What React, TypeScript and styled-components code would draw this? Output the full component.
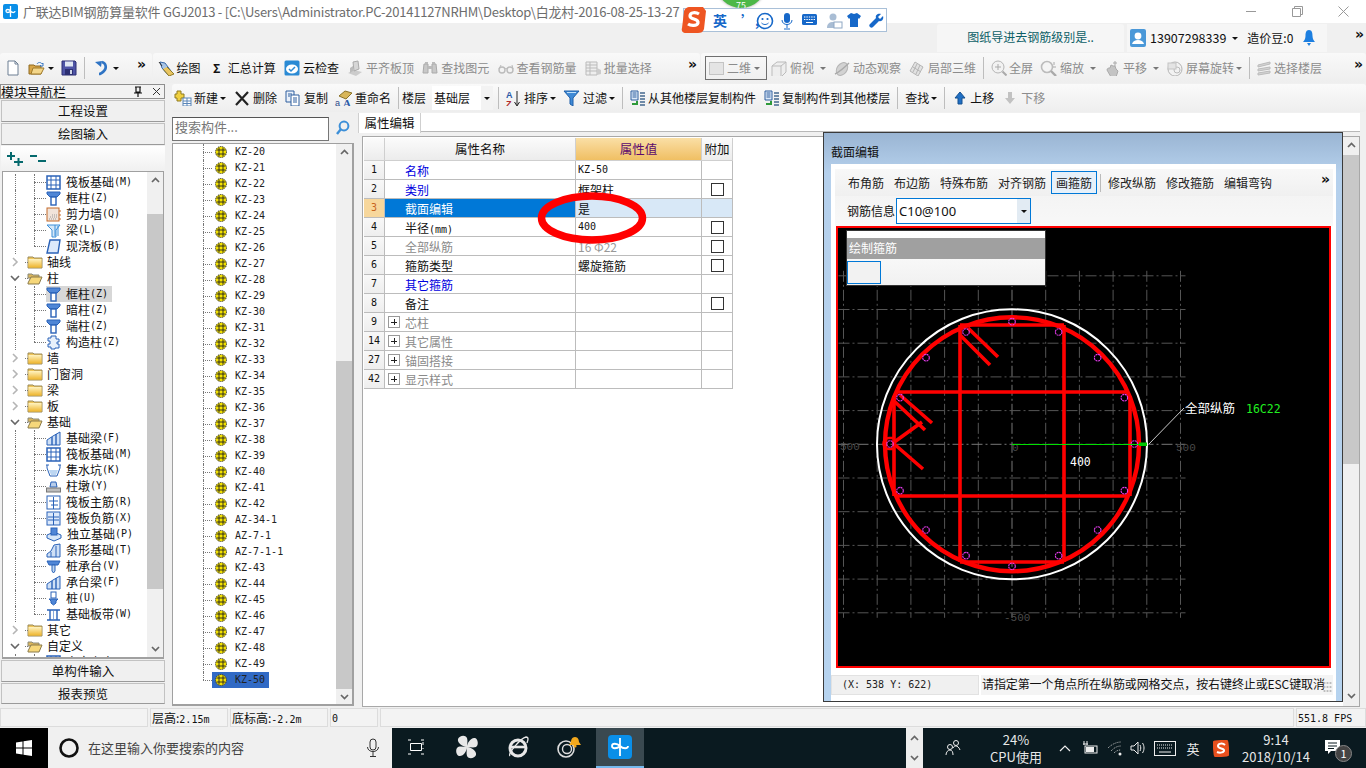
import React from "react";
import styled, { createGlobalStyle } from "styled-components";

const CJK = '"Noto Sans CJK SC", "Noto Sans", sans-serif';
const MONO = '"DejaVu Sans Mono", "Liberation Mono", monospace';

const Global = createGlobalStyle`
  html, body { margin: 0; padding: 0; background: #f0f0f0; overflow: hidden; }
  * { box-sizing: border-box; }
  body { font: 12px/16px ${CJK}; color: #111; }
`;

const Page = styled.div`
  position: relative; width: 1366px; height: 768px; overflow: hidden;
  display: flex; flex-direction: column; background: #f0f0f0;
`;

/* ---------- title ---------- */
const TitleBar = styled.div`
  height: 23px; background: #fff; display: flex; align-items: center; padding-left: 3px; position: relative;
`;
const TitleText = styled.div`
  margin-left: 5px; width: 660px; white-space: nowrap; overflow: hidden; color: #6d6d6d;
  font-size: 13px; line-height: 23px; letter-spacing: -0.22px;
`;
const WinControls = styled.div`
  margin-left: auto; display: flex; align-items: center;
`;
const WinBtn = styled.div`
  width: 46px; height: 23px; display: flex; align-items: center; justify-content: center;
`;
const Sogou = styled.div`
  position: absolute; left: 683px; top: 8px; width: 204px; height: 24px; background: #fff;
  border: 1px solid #a9c0d8; display: flex; align-items: center; z-index: 5;
`;
const SogouLogo = styled.div`
  position: absolute; left: -4px; top: -3px;
`;
const SogouItem = styled.div<{ $x: number }>`
  position: absolute; left: ${(p) => p.$x}px; top: 3px; color: #1668c9; font-weight: 700; font-size: 14px; line-height: 17px;
`;
const Ball = styled.div`
  position: absolute; left: 716px; top: -42px; width: 50px; height: 50px; border-radius: 50%;
  background: #4cb848; color: #fff; font-size: 9px; text-align: center; line-height: 96px; z-index: 4; box-shadow: 0 0 3px #999;
`;

/* ---------- info bar ---------- */
const InfoBar = styled.div`
  height: 30px; display: flex; align-items: flex-start; padding: 1px 0 0 937px; gap: 3px; position: relative;
`;
const Notice = styled.div`
  width: 187px; height: 28px; background: #f6f6f6; border-radius: 3px 3px 0 0; color: #0d5f66;
  font-size: 12px; line-height: 26px; text-align: center;
`;
const UserBox = styled.div`
  width: 200px; height: 28px; background: #f6f6f6; display: flex; align-items: center; padding-left: 3px; font-size: 12px;
`;
const Phone = styled.span`
  margin-left: 4px; font-size: 12.5px;
`;
const Bean = styled.span`
  margin-left: 9px; margin-right: 9px;
`;
const Chevrons = styled.span`
  font: 700 14px/12px "DejaVu Sans", sans-serif; color: #111;
`;
const InfoMore = styled.div`
  position: absolute; right: 2px; top: 3px;
`;

/* ---------- tool bars ---------- */
const ToolRow = styled.div`
  height: 30px; display: flex; gap: 1px;
`;
const Band = styled.div<{ $w?: number; $pad?: number; $gap?: number }>`
  ${(p) => (p.$w ? `width:${p.$w}px;` : "flex:1;")}
  height: 30px; display: flex; align-items: center; gap: ${(p) => p.$gap ?? 7}px; padding-left: ${(p) => p.$pad ?? 3}px; position: relative;
  background: linear-gradient(#f9f9f9, #eeeeee); border-radius: 3px;
`;
const BandMore = styled.div<{ $r: number }>`
  position: absolute; right: ${(p) => p.$r}px; top: 3px;
`;
const Tool = styled.div<{ $off?: boolean }>`
  display: flex; align-items: center; gap: 2px; white-space: nowrap; height: 22px; line-height: 20px;
  color: ${(p) => (p.$off ? "#8c8c8c" : "#111")};
`;
const IconBox = styled.span<{ $w?: number }>`
  width: ${(p) => p.$w ?? 18}px; height: 18px; display: inline-flex; align-items: center; justify-content: center; flex: none;
`;
const Caret = styled.span<{ $off?: boolean; $m?: number }>`
  display: inline-block; width: 0; height: 0; margin-left: ${(p) => p.$m ?? 0}px;
  border-left: 3px solid transparent; border-right: 3px solid transparent;
  border-top: 3px solid ${(p) => (p.$off ? "#777" : "#111")};
`;
const Sep = styled.span<{ $mr?: number }>`
  width: 1px; height: 22px; background: #bdbdbd; flex: none; margin-right: ${(p) => p.$mr ?? 0}px;
`;
const ViewCombo = styled.div`
  width: 62px; height: 24px; border: 1px solid #6f6f6f; display: flex; align-items: center; padding-left: 3px; gap: 3px; color: #8c8c8c; margin-right: -4px;
`;
const ViewSquare = styled.span`
  width: 15px; height: 13px; background: #e4e4e4; border: 1px solid #c4c4c4;
`;

/* ---------- main ---------- */
const Main = styled.div`
  height: 624px; display: flex;
`;
const LeftNav = styled.div`
  width: 166px; display: flex; flex-direction: column; padding-top: 1px;
`;
const NavHead = styled.div`
  height: 15px; border: 1px solid #8f8f8f; margin: 0 1px 0 0; display: flex; align-items: center; font-size: 13px; line-height: 13px; background: #f2f2f2; overflow: hidden;
`;
const NavHeadIcons = styled.span`
  margin-left: auto; margin-right: 3px; display: flex; gap: 9px; align-items: center;
`;
const NavBtn = styled.div<{ $h?: number }>`
  height: ${(p) => p.$h ?? 22}px; margin: 1px 1px 0 1px; background: #f0f0f0; border: 1px solid #c2c2c2; border-bottom-color: #9a9a9a;
  text-align: center; line-height: 20px; font-size: 12.5px; flex: none;
`;
const NavTools = styled.div`
  height: 25px; margin: 1px 1px 0 1px; background: linear-gradient(#fff, #f0f0f0); display: flex; align-items: center; padding-left: 5px; gap: 5px; flex: none;
`;
const TreeBox = styled.div`
  height: 488px; margin: 0 2px 0 2px; border: 1px solid #a0a0a0; border-bottom-width: 2px; background: #fff; display: flex; overflow: hidden; flex: none;
`;
const TreeList = styled.div`
  flex: 1; padding-top: 2px; overflow: hidden;
`;
const TreeRow = styled.div<{ $child?: boolean; $last?: boolean; $rail?: boolean }>`
  position: relative; height: 16px; display: flex; align-items: center; white-space: nowrap;
  padding-left: ${(p) => (p.$child ? 43 : 10)}px;
  ${(p) => p.$rail && `&::before{content:"";position:absolute;left:12px;top:0;bottom:0;border-left:1px dotted #777;}`}
  ${(p) =>
    p.$child &&
    `&::after{content:"";position:absolute;left:31px;top:0;height:${p.$last ? 8 : 16}px;width:12px;border-left:1px dotted #777;}`}
`;
const Elbow = styled.span<{ $l: number; $w: number }>`
  position: absolute; left: ${(p) => p.$l}px; top: 8px; width: ${(p) => p.$w}px; border-top: 1px dotted #777;
`;
const Chevron = styled.span`
  width: 12px; height: 16px; display: inline-flex; align-items: center; justify-content: center; margin-right: 6px; margin-left: -4px;
`;
const Label = styled.span<{ $on?: boolean; $child?: boolean }>`
  display: flex; align-items: center; height: 16px; gap: ${(p) => (p.$child ? 5 : 4)}px; padding-right: ${(p) => (p.$on ? 4 : 0)}px; background: ${(p) => (p.$on ? "#d7d7d7" : "transparent")};
`;
const Code = styled.span`
  font: 400 10px/16px ${MONO};
`;
const LabelText = styled.span`
  display: inline-flex; align-items: center;
`;
const ScrollBar = styled.div<{ $w?: number }>`
  width: ${(p) => p.$w ?? 16}px; background: #f0f0f0; display: flex; flex-direction: column; flex: none;
`;
const ScrollArrow = styled.div`
  height: 16px; display: flex; align-items: center; justify-content: center; flex: none;
`;
const ScrollGap = styled.div<{ $h: number }>`
  height: ${(p) => p.$h}px; flex: none;
`;
const ScrollThumb = styled.div<{ $h: number }>`
  height: ${(p) => p.$h}px; background: #c8c8c8; flex: none;
`;

const RightCol = styled.div`
  flex: 1; display: flex; flex-direction: column; padding-left: 6px; padding-top: 1px;
`;
const Tool2 = styled.div`
  height: 28px; display: flex; align-items: center; gap: 7px; padding-left: 2px; background: linear-gradient(#fafafa, #eeeeee); border-radius: 3px;
`;
const FloorCombo = styled.div`
  width: 61px; height: 24px; background: #fff; display: flex; align-items: center; padding-left: 2px; margin: 0 -2px 0 -1px; line-height: 20px;
`;
const FloorDrop = styled.span`
  margin-left: auto; width: 12px; height: 24px; display: flex; align-items: center; justify-content: center; background: #f3f3f3;
`;
const Work = styled.div`
  flex: 1; display: flex; gap: 6px; min-height: 0;
`;
const CompCol = styled.div`
  width: 184px; display: flex; flex-direction: column; padding-top: 5px;
`;
const SearchRow = styled.div`
  height: 26px; display: flex; align-items: flex-start; flex: none;
`;
const SearchInput = styled.div`
  width: 157px; height: 24px; background: #fff; border: 1px solid #777; border-top-color: #555; color: #777; padding-left: 2px; font-size: 13px; line-height: 18px;
`;
const SearchIcon = styled.span`
  margin-left: 3px; width: 22px; height: 22px; display: flex; align-items: center; justify-content: center;
`;
const CompBox = styled.div`
  height: 563px; border: 1px solid #a0a0a0; border-bottom-width: 2px; border-right-width: 2px; background: #fff; display: flex; overflow: hidden; margin-right: 2px;
`;
const CompList = styled.div`
  flex: 1; overflow: hidden;
`;
const CompRow = styled.div<{ $last?: boolean }>`
  position: relative; height: 16px; padding-left: 39px; display: flex; align-items: center;
  &::before { content: ""; position: absolute; left: 30px; top: 0; height: ${(p) => (p.$last ? 8 : 16)}px; border-left: 1px dotted #777; }
`;
const CompLabel = styled.span<{ $on?: boolean }>`
  display: flex; align-items: center; height: 16px; gap: 8px; padding: 0 4px 0 3px;
  font: 400 10px/16px ${MONO}; color: #222; background: ${(p) => (p.$on ? "#316ac5" : "transparent")};
`;

const PropPanel = styled.div`
  flex: 1; position: relative; display: flex; flex-direction: column; margin-right: 6px;
`;
const TabRow = styled.div`
  height: 19px; margin-top: 1px; display: flex; border-bottom: 1px solid #b8b8b8; flex: none; background: #fff;
`;
const Tab = styled.div`
  width: 63px; margin-left: -4px; background: #fff; text-align: center; line-height: 19px; font-size: 12.5px; border-right: 1px solid #cfcfcf; border-left: 1px solid #cfcfcf; height: 20px;
`;
const PropBody = styled.div`
  height: 571px; margin-top: 4px; border: 1px solid #a8a8a8; background: #fff; display: flex; flex: none; overflow: hidden;
`;
const TableWrap = styled.div`
  flex: 1; padding: 1px 0 0 1px;
`;
const Grid = styled.div`
  display: grid; width: 369px; grid-template-columns: 21px 191px 126px 31px; grid-template-rows: 23px; grid-auto-rows: 19px;
`;
const HCell = styled.div<{ $hot?: boolean }>`
  text-align: center; line-height: 21px; font-size: 12.5px;
  color: ${(p) => (p.$hot ? "#5c0a6e" : "#111")};
  background: ${(p) => (p.$hot ? "linear-gradient(#fadfa6,#f0bf63)" : "linear-gradient(#fbfbfb,#ececec)")};
  border-right: 1px solid #cfcfcf; border-bottom: 1px solid #cfcfcf;
`;
const Idx = styled.div<{ $on?: boolean }>`
  text-align: center; font: 400 10px/18px ${MONO}; color: ${(p) => (p.$on ? "#c8641e" : "#111")};
  background: ${(p) => (p.$on ? "#f7d79c" : "linear-gradient(#f8f8f8,#eeeeee)")};
  border-right: 1px solid #bcbcbc; border-bottom: 1px solid #bcbcbc;
`;
const NameCell = styled.div<{ $tone: string; $on?: boolean }>`
  color: ${(p) => (p.$on ? "#fff" : p.$tone)}; background: ${(p) => (p.$on ? "#0078d7" : "#fff")};
  padding-left: 20px; line-height: 20px; font-size: 12px; position: relative;
  border-right: 1px solid #bcbcbc; border-bottom: 1px solid #bcbcbc;
`;
const ValCell = styled.div<{ $on?: boolean; $gray?: boolean; $mono?: boolean }>`
  padding-left: 2px; white-space: nowrap; overflow: hidden;
  color: ${(p) => (p.$gray ? "#999" : "#111")}; background: ${(p) => (p.$on ? "#d8e8f7" : "#fff")};
  font: ${(p) => (p.$mono ? `400 10px/18px ${MONO}` : `400 12px/19px ${CJK}`)};
  border-right: 1px solid #bcbcbc; border-bottom: 1px solid #bcbcbc;
`;
const ExtraCell = styled.div<{ $on?: boolean }>`
  display: flex; align-items: center; justify-content: center; background: ${(p) => (p.$on ? "#d8e8f7" : "#fff")};
  border-right: 1px solid #bcbcbc; border-bottom: 1px solid #bcbcbc;
`;
const Check = styled.span`
  width: 13px; height: 13px; border: 1px solid #333; background: #fff;
`;
const Expand = styled.span`
  position: absolute; left: 3px; top: 3px; width: 12px; height: 12px; border: 1px solid #999; background: #fff;
  &::before { content: ""; position: absolute; left: 2px; right: 2px; top: 4.5px; height: 1px; background: #222; }
  &::after { content: ""; position: absolute; top: 2px; bottom: 2px; left: 4.5px; width: 1px; background: #222; }
`;
const Ring = styled.svg`
  position: absolute; left: 174px; top: 79px; pointer-events: none; z-index: 2;
`;

/* ---------- dialog ---------- */
const Dialog = styled.div`
  position: absolute; left: 461px; top: 20px; width: 520px; height: 570px; border: 1px solid #3a3a3a;
  background: linear-gradient(#9ab5d3 0, #b5d0ec 40px, #b6d3ef 100%); padding: 0 6px 0 7px; display: flex; flex-direction: column; z-index: 3;
`;
const DialogTitle = styled.div`
  height: 31px; line-height: 37px; font-size: 12px; color: #111; flex: none;
`;
const DialogInner = styled.div`
  flex: 1; background: #fff; padding: 5px 3px 0 4px; display: flex; flex-direction: column; min-height: 0;
`;
const DlgBar = styled.div`
  height: 27px; background: linear-gradient(#f8f8f8,#f0f0f0); display: flex; align-items: center; padding-left: 8px; position: relative; flex: none;
`;
const DlgTool = styled.div<{ $on?: boolean }>`
  height: 23px; line-height: 21px; padding: 0 4px; color: #222; white-space: nowrap;
  border: 1px solid ${(p) => (p.$on ? "#0078d7" : "transparent")}; background: ${(p) => (p.$on ? "#e7f1fa" : "transparent")};
`;
const DlgMore = styled.div`
  position: absolute; right: 3px; top: 2px;
`;
const DlgSep = styled.span`
  width: 1px; height: 18px; background: #bbb; margin: 0 2.5px;
`;
const DlgBar2 = styled.div`
  height: 30px; background: linear-gradient(#f4f4f4,#f8f8f8); display: flex; align-items: center; padding-left: 12px; flex: none;
`;
const DlgCombo = styled.div`
  width: 135px; height: 26px; margin-left: 1px; border: 1px solid #0078d7; background: #fff; display: flex; align-items: center; padding-left: 2px; font-size: 13px; font-family: "Noto Sans", sans-serif;
`;
const DlgDrop = styled.span`
  margin-left: auto; width: 13px; height: 24px; background: #e2ebf3; display: flex; align-items: center; justify-content: center;
`;
const CanvasBox = styled.div`
  position: relative; margin: 0 0 0 1px; width: 495px; height: 442px; border: 2px solid #f00; background: #000; flex: none; overflow: hidden;
`;
const Popup = styled.div`
  position: absolute; left: 8px; top: 2px; width: 200px; height: 56px; background: linear-gradient(#fff, #f1f1f1); border: 1px solid #333; padding-top: 7px;
`;
const PopupHead = styled.div`
  height: 21px; background: #a0a0a0; color: #fff; line-height: 20px; padding-left: 2px;
`;
const PopupBtn = styled.div`
  width: 34px; height: 23px; margin-top: 2px; border: 1px solid #0078d7; background: #f2f2f2;
`;
const DlgStatus = styled.div`
  position: relative; margin: 7px 0 0 -4px; display: flex; gap: 2px; height: 20px; flex: none; font: 400 10px/18px ${MONO};
`;
const DlgCoord = styled.div`
  width: 148px; background: #f0f0f0; padding-left: 10px; border: 1px solid #e2e2e2; color: #222;
`;
const DlgHint = styled.div`
  flex: 1; background: #f4f4f4; padding-left: 1px; font: 400 12px/18px ${CJK}; white-space: nowrap; overflow: hidden; letter-spacing: -0.1px;
`;
const Grip = styled.span`
  position: absolute; right: 1px; bottom: 2px; width: 9px; height: 12px;
  background-image: radial-gradient(circle, #bdbdbd 1px, transparent 1.2px); background-size: 3px 4px;
`;

/* ---------- status ---------- */
const StatusBar = styled.div`
  height: 21px; display: flex; gap: 2px; padding-top: 1px; font: 400 10px/19px ${MONO};
`;
const SCell = styled.div<{ $w?: number }>`
  ${(p) => (p.$w ? `width:${p.$w}px;` : "flex:1;")}
  height: 19px; background: #f3f3f3; border: 1px solid #dcdcdc; padding-left: 1px; white-space: nowrap; overflow: hidden;
`;
const SCjk = styled.span`
  font: 400 12px/18px ${CJK};
`;

/* ---------- taskbar ---------- */
const Taskbar = styled.div`
  height: 40px; background: #0a1a20; display: flex; color: #e8e8e8; flex: none;
`;
const StartBtn = styled.div`
  width: 48px; background: #000; display: flex; align-items: center; justify-content: center;
`;
const TaskSearch = styled.div`
  width: 344px; background: #f0f0f0; color: #444; display: flex; align-items: center; padding: 0 12px 0 10px; font-size: 13px;
`;
const SearchHint = styled.span`
  margin-left: 8px; flex: 1;
`;
const Apps = styled.div`
  display: flex; gap: 3px;
`;
const AppBtn = styled.div<{ $on?: boolean }>`
  width: 48px; height: 40px; display: flex; align-items: center; justify-content: center; position: relative;
  background: ${(p) => (p.$on ? "#3a4950" : "transparent")}; border-bottom: 2px solid ${(p) => (p.$on ? "#76b9ed" : "transparent")};
`;
const TrayScroll = styled.div`
  margin-left: auto; width: 17px; background: #eee; display: flex; flex-direction: column; justify-content: space-around; align-items: center;
`;
const TrayItem = styled.div<{ $w: number }>`
  width: ${(p) => p.$w}px; display: flex; align-items: center; justify-content: center; flex-direction: column; text-align: center; line-height: 17px; font-size: 13px; flex: none; position: relative;
`;
const TrayEnd = styled.div`
  width: 11px; flex: none;
`;
const Badge = styled.span`
  position: absolute; left: 24px; top: 17px; width: 17px; height: 17px; border-radius: 50%; background: #444; border: 1px solid #888; color: #fff; font-size: 11px; line-height: 15px; text-align: center;
`;

/* ---------- icons ---------- */
type S = { c?: string };
const Svg = ({ w = 16, h = 16, children }: { w?: number; h?: number; children: React.ReactNode }) => (
  <svg width={w} height={h} viewBox={`0 0 ${w} ${h}`} fill="none">{children}</svg>
);
const IcNew = () => <Svg><path d="M3 1h7l3 3v11H3z" fill="#fff" stroke="#6d7f93" /><path d="M10 1v3h3" stroke="#6d7f93" /></Svg>;
const IcOpen = () => <Svg w={18}><path d="M1 5h5l1 1h6v8H1z" fill="#d8a648" stroke="#8f6a22" /><path d="M3 14l2-6h11l-3 6z" fill="#f3d68a" stroke="#a07a2a" /><path d="M9 4c1-2 4-2 5 0l1-1v3h-3l1-1" stroke="#3d7bc4" /></Svg>;
const IcSave = () => <Svg><path d="M1 1h13l1 1v13H1z" fill="#4e54a6" stroke="#2c2f72" /><rect x="4" y="1.5" width="8" height="5" fill="#dfe6f2" /><rect x="4" y="9" width="8" height="6" fill="#2c2f72" /><rect x="9" y="10" width="2" height="4" fill="#cfd6e6" /></Svg>;
const IcUndo = () => <Svg><path d="M10 2c4 1 5 6 2 9-1 1-3 3-5 3" stroke="#2f74c4" strokeWidth="2.6" /><path d="M3 2l7-1-1 6z" fill="#2f74c4" /></Svg>;
const IcDraw = () => <Svg w={18}><path d="M3 2l5 1 6 8-3 4-6-7z" fill="#a8c5e6" stroke="#3a6aa8" /><path d="M6 9l6 7 5-2-7-7" fill="#e9c560" stroke="#8f7a2a" /><path d="M2 2l3 4" stroke="#333" /></Svg>;
const IcCloud = () => <Svg><rect x="0.5" y="0.5" width="15" height="15" rx="1.5" fill="#2a8ad4" /><ellipse cx="8" cy="9" rx="6" ry="4.5" fill="#fff" /><path d="M5 9l2 2 4-4" stroke="#2a8ad4" strokeWidth="1.5" /></Svg>;
const IcGrayBlock = () => <Svg w={18}><path d="M2 13l6-3 8 2-6 4z" fill="#ccc" /><path d="M7 2l5-1 1 8-5 2z" fill="#d6d6d6" stroke="#aaa" /><path d="M4 8l3-2v5l-3 2z" fill="#bbb" /></Svg>;
const IcBino = () => <Svg w={18}><path d="M3 4h4v9H2zM11 4h4l1 9h-5z" fill="#c8c8c8" stroke="#aaa" /><rect x="7" y="6" width="4" height="3" fill="#bbb" /><rect x="4" y="2" width="3" height="2" fill="#bbb" /><rect x="11" y="2" width="3" height="2" fill="#bbb" /></Svg>;
const IcGlass = () => <Svg w={18}><circle cx="5" cy="10" r="3" stroke="#bbb" strokeWidth="1.4" /><circle cx="13" cy="10" r="3" stroke="#bbb" strokeWidth="1.4" /><path d="M8 9c1-1 1-1 2 0M2 9l2-4M16 9l-1-4" stroke="#bbb" /></Svg>;
const IcBatch = () => <Svg w={18}><path d="M2 2h11v13H2z" fill="#eee" stroke="#bbb" /><path d="M2 5h11M2 8h11M2 11h11M6 2v13" stroke="#bbb" /><path d="M13 8l4 2v4l-4 1z" fill="#ccc" /></Svg>;
const IcCube = () => <Svg w={18}><path d="M2 6l5-4h9v10l-5 5H2z" fill="#eee" stroke="#bbb" /><path d="M2 6h9v11M11 6l5-4" stroke="#bbb" /></Svg>;
const IcOrbit = () => <Svg w={18}><ellipse cx="9" cy="9" rx="5" ry="7" transform="rotate(35 9 9)" fill="#d2d2d2" stroke="#b5b5b5" /><path d="M2 14C6 12 13 6 16 3" stroke="#aaa" strokeWidth="1.4" /></Svg>;
const IcLocal = () => <Svg w={18}><path d="M7 2l8 5-5 9-8-5z" fill="#e2e2e2" stroke="#b5b5b5" /><path d="M5 7l8 5M9 4l-4 8M12 5l-4 9" stroke="#b5b5b5" /></Svg>;
const IcZoomFull = () => <Svg w={16}><circle cx="7" cy="7" r="6" fill="#f2f2f2" stroke="#b5b5b5" /><path d="M7 4v6M4 7h6" stroke="#aaa" /><path d="M11.5 11.5l4 4" stroke="#aaa" strokeWidth="2" /></Svg>;
const IcZoom = () => <Svg w={18}><circle cx="7" cy="7" r="5.5" fill="#f5f5f5" stroke="#bcbcbc" strokeWidth="1.6" /><path d="M11 11l5 5" stroke="#aaa" strokeWidth="2.4" /><path d="M14 2v3M13 7h3" stroke="#aaa" /></Svg>;
const IcPan = () => <Svg w={18}><path d="M4 10c0-2 2-2 3-2l1-3 2 1 2 0 1 3 2 2-2 6H8z" fill="#c4c4c4" stroke="#aaa" /><path d="M12 1v5M10 3h4" stroke="#aaa" /></Svg>;
const IcRotate = () => <Svg w={18}><circle cx="9" cy="9" r="7" fill="#f2f2f2" stroke="#b5b5b5" /><circle cx="11" cy="10" r="3" stroke="#bbb" /><rect x="2" y="3" width="8" height="6" fill="#e4e4e4" stroke="#c4c4c4" /></Svg>;
const IcLayers = () => <Svg w={15}><path d="M1 5l12-3v2L1 7zM1 9l12-2v2L1 11zM1 13l12-2v2L1 15z" fill="#d4d4d4" stroke="#bbb" /></Svg>;
const IcAdd = () => <Svg w={18}><path d="M3 1h4v3h3v4H7v3H3V8H1V4h2z" fill="#f0d040" stroke="#8f7a20" /><rect x="9" y="8" width="8" height="8" fill="#fff" stroke="#5a86b8" /><path d="M9 11h8M13 8v8M9 13.5h8" stroke="#5a86b8" /></Svg>;
const IcDelete = () => <Svg w={18}><path d="M3 2l12 13M15 2L3 15" stroke="#222" strokeWidth="2.2" /></Svg>;
const IcCopy = () => <Svg w={18}><path d="M2 1h8v11H2z" fill="#eaf1fa" stroke="#2f5f9e" /><path d="M7 5h8v11H7z" fill="#fff" stroke="#2f5f9e" /><path d="M4 4h4M4 6h2M9 8h4M9 10h4M9 12h4" stroke="#2f5f9e" /></Svg>;
const IcRename = () => <Svg w={18}><path d="M4 6l6-5 7 2-6 6z" fill="#d8b65a" stroke="#8a7228" /><text x="0" y="16" fontSize="9" fontFamily="Liberation Sans" fill="#2a4a8a">a</text><text x="8" y="16.5" fontSize="11" fontWeight="700" fontFamily="Liberation Serif" fill="#2a5aa8">A</text></Svg>;
const IcSort = () => <Svg w={16}><text x="0" y="8" fontSize="9" fontWeight="700" fontFamily="Liberation Sans" fill="#2a5aa8">A</text><text x="0" y="17" fontSize="9" fontWeight="700" fontFamily="Liberation Sans" fill="#b02a2a">Z</text><path d="M11 1v14M8.5 12l2.5 4 2.5-4" stroke="#222" /></Svg>;
const IcFilter = () => <Svg w={18}><path d="M1 1h15l-6 7v8l-3-2V8z" fill="#3f8ad6" stroke="#1f5fa8" /><path d="M4 2.5h9" stroke="#bfe0fa" /></Svg>;
const IcDoc = ({ c = "#2f5f9e" }: S) => <Svg w={16}><path d="M1 1h7v9H1z" fill="#dce9f8" stroke={c} /><path d="M2.5 3h4M2.5 5h4M2.5 7h4" stroke={c} /><path d="M2 14h5v-3" stroke="#2e9a3a" strokeWidth="2" /><path d="M10 3h5M10 6h5M10 9h5M10 12h5M10 15h5" stroke="#44688f" strokeWidth="1.4" /></Svg>;
const IcUp = () => <Svg><path d="M8 2l5 6h-3v6H6V8H3z" fill="#1f6fc4" stroke="#15508f" /></Svg>;
const IcDown = () => <Svg><path d="M6 2h4v6h3l-5 6-5-6h3z" fill="#c2c2c2" /></Svg>;
const IcPin = () => <Svg w={10} h={12}><path d="M2 1h6M3 1v5h4V1M1 7h8M5 7v4" stroke="#111" strokeWidth="1.2" /></Svg>;
const IcX = () => <Svg w={9} h={9}><path d="M1 1l7 7M8 1L1 8" stroke="#333" /></Svg>;
const IcSearch = () => <Svg><circle cx="9" cy="6" r="4.4" stroke="#3c8fd8" strokeWidth="2" /><path d="M6 9l-4 5" stroke="#3c8fd8" strokeWidth="2.4" /></Svg>;
const IcPlusPlus = () => <Svg w={18} h={16}><path d="M1 5h8M5 1v8" stroke="#05696d" strokeWidth="2" /><path d="M8 11h9M12.5 7v8" stroke="#05696d" strokeWidth="2" /></Svg>;
const IcMinusMinus = () => <Svg w={18} h={16}><path d="M1 5h7M9 10h8" stroke="#05696d" strokeWidth="2" /></Svg>;

const Folder = ({ open }: { open?: boolean }) =>
  open ? (
    <Svg w={16} h={14}><path d="M1 3h4l1 1h6v3H1z" fill="#d9b45a" stroke="#8a8a7a" /><path d="M1 12l3-6h11l-3 7H1z" fill="#f6d77a" stroke="#8a7a4a" /></Svg>
  ) : (
    <Svg w={16} h={14}><path d="M1 2h5l1 1h8v10H1z" fill="#f0c65a" stroke="#9a8a5a" /><rect x="1.5" y="4" width="13" height="8.5" fill="url(#fg)" /><defs><linearGradient id="fg" x1="0" y1="0" x2="0" y2="1"><stop offset="0" stopColor="#fff3c0" /><stop offset="1" stopColor="#eeb52e" /></linearGradient></defs></Svg>
  );
const ChevR = () => <Svg w={8} h={10}><path d="M2 1l4 4-4 4" stroke="#b5b5b5" strokeWidth="1.6" /></Svg>;
const ChevD = () => <Svg w={10} h={8}><path d="M1 2l4 4 4-4" stroke="#666" strokeWidth="1.6" /></Svg>;
const ArrUp = () => <Svg w={9} h={6}><path d="M1 5l3.5-3.5L8 5" stroke="#666" strokeWidth="1.7" /></Svg>;
const ArrDown = () => <Svg w={9} h={6}><path d="M1 1l3.5 3.5L8 1" stroke="#666" strokeWidth="1.7" /></Svg>;

const B = "#2a62b8";
const TreeIc = ({ k }: { k: string }) => {
  switch (k) {
    case "col":
      return <Svg w={15} h={15}><path d="M1 1h13v2l-3 3H4L1 3z" fill="#4f86d6" stroke={B} /><rect x="5" y="6" width="5" height="8" fill="#fff" stroke={B} strokeWidth="1.4" /></Svg>;
    case "raft":
      return <Svg w={15} h={15}><rect x="1" y="1" width="13" height="13" fill="#fff" stroke={B} strokeWidth="1.5" /><path d="M1 5h13M1 10h13M5 1v13M10 1v13" stroke={B} /></Svg>;
    case "wall":
      return <Svg w={15} h={15}><rect x="1" y="1" width="12" height="13" fill="#f1e4da" stroke="#c46a2a" /><path d="M3 12h8M4 10h7M6 8h5" stroke="#999" strokeDasharray="1 1" /><path d="M13 4h2M13 8h2M13 12h2" stroke="#c46a2a" /></Svg>;
    case "beam":
      return <Svg w={15} h={15}><path d="M1 2h13l-4 5v7H6V7z" fill="#d6e8f8" stroke="#3c8fd8" /><path d="M9 2v11M12 3v10" stroke="#3c8fd8" /></Svg>;
    case "slab":
      return <Svg w={15} h={15}><path d="M4 1h10l-2 13H1z" fill="#dce9fb" stroke={B} strokeWidth="1.4" /></Svg>;
    case "gz":
      return <Svg w={15} h={15}><path d="M5 1h5v3h3v3h-2v2h2v4H9v1H5v-2H2V9h2V6H2V3h3z" fill="#e8f0fb" stroke={B} /></Svg>;
    case "fbeam":
      return <Svg w={15} h={15}><path d="M1 14V9l6-4 7-4v13z" fill="#cfe0f6" stroke={B} /><path d="M6 14V6M10 14V3" stroke={B} strokeWidth="1.4" /></Svg>;
    case "pit":
      return <Svg w={15} h={15}><path d="M1 2v3l3 8h7l3-8V2" stroke={B} /><path d="M3 7h9l-2 5H5z" fill="#bcd6f2" /><path d="M0 2h3M12 2h3" stroke={B} /></Svg>;
    case "pier":
      return <Svg w={15} h={15}><path d="M5 3h5l1 5H4z" fill="#b8cdea" stroke={B} /><rect x="0.5" y="9" width="14" height="4" fill="#bdbdbd" stroke="#777" /></Svg>;
    case "main":
      return <Svg w={15} h={15}><rect x="1" y="1" width="13" height="13" fill="#fff" stroke={B} /><path d="M7.5 2v12M3 6h9M5 10h7" stroke={B} /></Svg>;
    case "neg":
      return <Svg w={15} h={15}><rect x="1" y="1" width="13" height="13" fill="#dce9fb" stroke={B} /><path d="M7.5 2v12M2 6h11M2 9h11" stroke={B} /></Svg>;
    case "iso":
      return <Svg w={16} h={15}><path d="M1 8l7-3 7 3v3l-7 3-7-3z" fill="#d6e6f8" stroke={B} /><rect x="5" y="1" width="6" height="7" fill="#4f86d6" stroke={B} /></Svg>;
    case "strip":
      return <Svg w={15} h={15}><path d="M1 14v-3l4-3 3-6 6-1v13z" fill="#cfe0f6" stroke={B} /><path d="M5 14V9M10 14V3" stroke={B} /></Svg>;
    case "cap":
      return <Svg w={15} h={15}><path d="M1 2h13l-2 4H3z" fill="#4f86d6" stroke={B} /><path d="M6 6h3v6l-1.5 2L6 12z" fill="#bcd6f2" stroke={B} /></Svg>;
    case "pile":
      return <Svg w={15} h={15}><rect x="5" y="1" width="5" height="6" fill="#fff" stroke={B} /><path d="M3 8h9l-2 2v2l-2.5 2L5 12v-2z" fill="#4f86d6" stroke={B} /></Svg>;
    default:
      return <Svg w={15} h={15}><path d="M1 3h13M1 13h13M4 3v10M11 3v10" stroke={B} strokeWidth="1.4" /><path d="M7.5 4v8" stroke="#88aadd" /></Svg>;
  }
};
const CompIc = () => (
  <Svg w={12} h={12}>
    <circle cx="6" cy="6" r="5.5" fill="#f4e200" stroke="#333" strokeDasharray="1.2 0.8" />
    <path d="M1.5 4h9M1.5 8h9M4 1.5v9M8 1.5v9" stroke="#222" strokeWidth="0.9" />
  </Svg>
);

/* ---------- data ---------- */
type T = { n: string; c?: string; k?: string; f?: "open" | "closed"; last?: boolean; on?: boolean };
const tree: T[] = [
  { n: "筏板基础", c: "(M)", k: "raft" }, { n: "框柱", c: "(Z)", k: "col" }, { n: "剪力墙", c: "(Q)", k: "wall" },
  { n: "梁", c: "(L)", k: "beam" }, { n: "现浇板", c: "(B)", k: "slab", last: true },
  { n: "轴线", f: "closed" }, { n: "柱", f: "open" },
  { n: "框柱", c: "(Z)", k: "col", on: true }, { n: "暗柱", c: "(Z)", k: "col" }, { n: "端柱", c: "(Z)", k: "col" }, { n: "构造柱", c: "(Z)", k: "gz", last: true },
  { n: "墙", f: "closed" }, { n: "门窗洞", f: "closed" }, { n: "梁", f: "closed" }, { n: "板", f: "closed" }, { n: "基础", f: "open" },
  { n: "基础梁", c: "(F)", k: "fbeam" }, { n: "筏板基础", c: "(M)", k: "raft" }, { n: "集水坑", c: "(K)", k: "pit" }, { n: "柱墩", c: "(Y)", k: "pier" },
  { n: "筏板主筋", c: "(R)", k: "main" }, { n: "筏板负筋", c: "(X)", k: "neg" }, { n: "独立基础", c: "(P)", k: "iso" }, { n: "条形基础", c: "(T)", k: "strip" },
  { n: "桩承台", c: "(V)", k: "cap" }, { n: "承台梁", c: "(F)", k: "fbeam" }, { n: "桩", c: "(U)", k: "pile" }, { n: "基础板带", c: "(W)", k: "band", last: true },
  { n: "其它", f: "closed" }, { n: "自定义", f: "open" }, { n: "自定义点", c: "(D)", k: "raft" },
];
const comps = [
  ...Array.from({ length: 23 }, (_, i) => `KZ-${20 + i}`), "AZ-34-1", "AZ-7-1", "AZ-7-1-1",
  ...Array.from({ length: 8 }, (_, i) => `KZ-${43 + i}`),
];
const BLUE = "#0000e0", GRAY = "#8a8a8a", BLACK = "#111";
const rows: { i: string; n: string; code?: string; t: string; v?: string; mono?: boolean; gray?: boolean; chk?: boolean; on?: boolean; exp?: boolean }[] = [
  { i: "1", n: "名称", t: BLUE, v: "KZ-50", mono: true },
  { i: "2", n: "类别", t: BLUE, v: "框架柱", chk: true },
  { i: "3", n: "截面编辑", t: BLACK, v: "是", on: true },
  { i: "4", n: "半径", code: "(mm)", t: BLACK, v: "400", mono: true, chk: true },
  { i: "5", n: "全部纵筋", t: GRAY, v: "16 Φ22", gray: true, chk: true },
  { i: "6", n: "箍筋类型", t: BLACK, v: "螺旋箍筋", chk: true },
  { i: "7", n: "其它箍筋", t: BLUE },
  { i: "8", n: "备注", t: BLACK, chk: true },
  { i: "9", n: "芯柱", t: GRAY, exp: true },
  { i: "14", n: "其它属性", t: GRAY, exp: true },
  { i: "27", n: "锚固搭接", t: GRAY, exp: true },
  { i: "42", n: "显示样式", t: GRAY, exp: true },
];
const bars: [number, number][] = [[456,65],[596,96],[713,173],[793,293],[823,432],[793,572],[713,690],[596,767],[456,799],[318,767],[198,690],[120,572],[90,432],[120,293],[198,173],[318,96]];

const Section = () => {
  const cx = 1012, cy = 444.3, st = 33.7;
  const xs = Array.from({ length: 11 }, (_, i) => cx + (i - 5) * st);
  const ys = Array.from({ length: 11 }, (_, i) => cy + (i - 5) * st);
  const red = { stroke: "#f00", strokeWidth: 3.6 };
  const f = (px: number, py: number) => [px / 3 + 860, py / 3 + 300];
  return (
    <svg width="491" height="438" viewBox="838 228 491 438" fill="none" style={{ display: "block" }}>
      {xs.map((x, i) => (
        <line key={"x" + i} x1={x} x2={x} y1={ys[0] - 5} y2={ys[10] + 5} stroke={i === 5 ? "#777" : "#555"} strokeDasharray="11 3 2 3" />
      ))}
      {ys.map((y, i) => (
        <line key={"y" + i} y1={y} y2={y} x1={xs[0] - 5} x2={xs[10] + 5} stroke={i === 5 ? "#777" : "#555"} strokeDasharray="11 3 2 3" />
      ))}
      <g fontFamily="Liberation Mono, monospace" fontSize="11" fill="#4a4a4a">
        <text x="840" y="450">500</text><text x="1176" y="451">500</text><text x="1012" y="451">0</text><text x="1004" y="621">-500</text>
      </g>
      <circle cx={cx} cy={cy} r="135" stroke="#fff" strokeWidth="2" />
      <circle cx={cx} cy={cy} r="127" stroke="#f00" strokeWidth="4.4" />
      <g {...red}>
        <path d="M960 325V562M1064 325V562M897 392H1128M897 496H1128M960 325H1064M960 562H1064" />
        <path d="M894 396V496M1130 396V496" />
        <path d="M968 328L998 357M960 335L990 365M900 395L932 423M893 400L925 430M893 443L922 422M893 443L923 469" />
        <path d="M893 438h-4a5 5 0 0 0 0 11h4" strokeWidth="2.5" />
      </g>
      {bars.map(([a, b], i) => {
        const [x, y] = f(a, b);
        return <circle key={i} cx={x} cy={y} r="3.3" stroke="#e83cf0" strokeWidth="1.1" strokeDasharray="2 0.6" />;
      })}
      <path d="M1012 444.5H1146" stroke="#00e000" strokeWidth="1.2" />
      <path d="M1139 442.5h8v3.5h-8z" fill="#00c800" />
      <path d="M1149 444L1184 408" stroke="#fff" strokeWidth="0.8" />
      <text x="1185" y="413" fill="#fff" fontSize="12.5" fontFamily="Noto Sans CJK SC, sans-serif">全部纵筋</text>
      <text x="1246" y="413" fill="#20f020" fontSize="11.5" fontFamily="DejaVu Sans Mono, monospace">16C22</text>
      <text x="1070" y="466" fill="#fff" fontSize="11.5" fontFamily="DejaVu Sans Mono, monospace">400</text>
    </svg>
  );
};

const TreeView = () => (
  <TreeList>
    {tree.map((t, i) =>
      t.f ? (
        <TreeRow key={i}>
          <Chevron>{t.f === "open" ? <ChevD /> : <ChevR />}</Chevron>
          <Elbow $l={22} $w={3} />
          <Label><Folder open={t.f === "open"} /><LabelText>{t.n}</LabelText></Label>
        </TreeRow>
      ) : (
        <TreeRow key={i} $child $last={t.last} $rail>
          <Elbow $l={31} $w={12} />
          <Label $child $on={t.on}><TreeIc k={t.k!} /><LabelText>{t.n}<Code>{t.c}</Code></LabelText></Label>
        </TreeRow>
      )
    )}
  </TreeList>
);

export default function App() {
  return (
    <Page>
      <Global />
      <Ball>75</Ball>
      <Sogou>
        <SogouLogo>
          <Svg w={27} h={28}><path d="M4 6c0-3 3-5 6-5h13l3 4-2 18c-1 3-3 4-6 4H6c-3 0-5-2-4-5z" fill="#ee5522" /><path d="M19 8c-3-2-9-2-9 2 0 4 9 2 8 7-1 3-7 3-10 1" stroke="#fff" strokeWidth="3.2" /></Svg>
        </SogouLogo>
        <SogouItem $x={29}>英</SogouItem>
        <SogouItem $x={57}>’,</SogouItem>
        <SogouItem $x={72}><Svg w={18} h={18}><circle cx="9" cy="9" r="7.5" stroke="#1668c9" strokeWidth="1.6" /><circle cx="6.5" cy="7" r="1.1" fill="#1668c9" /><circle cx="11.5" cy="7" r="1.1" fill="#1668c9" /><path d="M5.5 11c2 2 5 2 7 0" stroke="#1668c9" /></Svg></SogouItem>
        <SogouItem $x={96}><Svg w={14} h={18}><rect x="4" y="1" width="6" height="10" rx="3" fill="#1668c9" /><path d="M2 8c0 6 10 6 10 0M7 13v3M4 17h6" stroke="#1668c9" /></Svg></SogouItem>
        <SogouItem $x={117}><Svg w={17} h={15}><rect x="1" y="2" width="15" height="11" rx="1.5" fill="#1668c9" /><path d="M3 5h11M3 7.5h11" stroke="#fff" strokeDasharray="1.4 1" /><path d="M5 10.5h7" stroke="#fff" /></Svg></SogouItem>
        <SogouItem $x={142}><Svg w={17} h={18}><circle cx="7" cy="5" r="3.5" fill="#a9bdd4" /><path d="M1 16c0-5 3-6 6-6s6 1 6 6z" fill="#a9bdd4" /><rect x="8" y="10" width="8" height="6" fill="#fff" stroke="#8fa8c4" /></Svg></SogouItem>
        <SogouItem $x={162}><Svg w={16} h={16}><path d="M5 1l3 1 3-1 4 3-2 3-1-1v9H4V6L3 7 1 4z" fill="#1668c9" /></Svg></SogouItem>
        <SogouItem $x={184}><Svg w={16} h={17}><path d="M2 15c-1-1-1-2 0-3l6-6c-1-3 2-5 5-4l-3 3 2 2 3-3c1 3-1 6-4 5l-6 6c-1 1-2 1-3 0z" fill="#1668c9" /></Svg></SogouItem>
      </Sogou>

      <TitleBar>
        <Svg w={15} h={15}><rect width="15" height="15" rx="2" fill="#0a8fe8" /><path d="M7.5 2v11M3 7c0-2 3-2 4.5 0S12 9 12 7M3 7c0 2 3 2 4.5 0" stroke="#fff" strokeWidth="1.3" /></Svg>
        <TitleText>广联达BIM钢筋算量软件 GGJ2013 - [C:\Users\Administrator.PC-20141127NRHM\Desktop\白龙村-2016-08-25-13-27</TitleText>
        <WinControls>
          <WinBtn><Svg w={11} h={11}><path d="M0 5.5h10" stroke="#999" /></Svg></WinBtn>
          <WinBtn><Svg w={11} h={11}><path d="M2.5 2.5V.5h8v8h-2M.5 2.5h8v8h-8z" stroke="#999" /></Svg></WinBtn>
          <WinBtn><Svg w={11} h={11}><path d="M.5.5l10 10M10.5.5l-10 10" stroke="#999" /></Svg></WinBtn>
        </WinControls>
      </TitleBar>

      <InfoBar>
        <Notice>图纸导进去钢筋级别是..</Notice>
        <UserBox>
          <Svg w={16} h={18}><rect width="16" height="18" rx="2" fill="#4a98d8" /><circle cx="8" cy="7" r="3.4" fill="#fff" /><path d="M2 15c1-3 3-4 6-4s5 1 6 4z" fill="#fff" /></Svg>
          <Phone>13907298339</Phone>
          <Caret $m={6} />
          <Bean>造价豆:0</Bean>
          <Svg w={14} h={18}><path d="M7 1c3 0 3.5 3 3.5 6s1.5 5 2.5 6H1c1-1 2.5-3 2.5-6S4 1 7 1z" fill="#1d7fe0" /><path d="M5 14h4l-2 3z" fill="#1d7fe0" /></Svg>
        </UserBox>
        <InfoMore><Chevrons>»</Chevrons></InfoMore>
      </InfoBar>

      <ToolRow>
        <Band $w={152} $pad={5}>
          <IconBox $w={16}><IcNew /></IconBox>
          <Tool><IconBox $w={18}><IcOpen /></IconBox><Caret /></Tool>
          <IconBox $w={16}><IcSave /></IconBox>
          <Sep />
          <Tool><IconBox $w={16}><IcUndo /></IconBox><Caret $m={3} /></Tool>
          <BandMore $r={6}><Chevrons>»</Chevrons></BandMore>
        </Band>
        <Band $w={547} $gap={7.2} $pad={3.5}>
          <Tool><IconBox><IcDraw /></IconBox>绘图</Tool>
          <Tool><IconBox><strong>Σ</strong></IconBox>汇总计算</Tool>
          <Tool><IconBox><IcCloud /></IconBox>云检查</Tool>
          <Tool $off><IconBox><IcGrayBlock /></IconBox>平齐板顶</Tool>
          <Tool $off><IconBox><IcBino /></IconBox>查找图元</Tool>
          <Tool $off><IconBox><IcGlass /></IconBox>查看钢筋量</Tool>
          <Tool $off><IconBox><IcBatch /></IconBox>批量选择</Tool>
          <BandMore $r={3}><Chevrons>»</Chevrons></BandMore>
        </Band>
        <Band $pad={4}>
          <ViewCombo><ViewSquare />二维<Caret $off /></ViewCombo>
          <Tool $off><IconBox><IcCube /></IconBox>俯视<Caret $off $m={4} /></Tool>
          <Tool $off><IconBox><IcOrbit /></IconBox>动态观察</Tool>
          <Tool $off><IconBox><IcLocal /></IconBox>局部三维</Tool>
          <Sep />
          <Tool $off><IconBox $w={16}><IcZoomFull /></IconBox>全屏</Tool>
          <Tool $off><IconBox><IcZoom /></IconBox>缩放<Caret $off $m={4} /></Tool>
          <Tool $off><IconBox><IcPan /></IconBox>平移<Caret $off $m={4} /></Tool>
          <Tool $off><IconBox><IcRotate /></IconBox>屏幕旋转<Caret $off /></Tool>
          <Sep />
          <Tool $off><IconBox $w={15}><IcLayers /></IconBox>选择楼层</Tool>
          <BandMore $r={3}><Chevrons>»</Chevrons></BandMore>
        </Band>
      </ToolRow>

      <Main>
        <LeftNav>
          <NavHead>模块导航栏<NavHeadIcons><IcPin /><IcX /></NavHeadIcons></NavHead>
          <NavBtn>工程设置</NavBtn>
          <NavBtn>绘图输入</NavBtn>
          <NavTools><IcPlusPlus /><IcMinusMinus /></NavTools>
          <TreeBox>
            <TreeView />
            <ScrollBar>
              <ScrollArrow><ArrUp /></ScrollArrow>
              <ScrollGap $h={26} />
              <ScrollThumb $h={375} />
              <ScrollGap $h={52} />
              <ScrollArrow><ArrDown /></ScrollArrow>
            </ScrollBar>
          </TreeBox>
          <NavBtn>单构件输入</NavBtn>
          <NavBtn $h={21}>报表预览</NavBtn>
        </LeftNav>

        <RightCol>
          <Tool2>
            <Tool><IconBox><IcAdd /></IconBox>新建<Caret /></Tool>
            <Tool><IconBox><IcDelete /></IconBox>删除</Tool>
            <Tool><IconBox><IcCopy /></IconBox>复制</Tool>
            <Tool><IconBox><IcRename /></IconBox>重命名</Tool>
            <Sep $mr={-4} />
            <Tool>楼层</Tool>
            <FloorCombo>基础层<FloorDrop><Caret /></FloorDrop></FloorCombo>
            <Sep />
            <Tool><IconBox $w={16}><IcSort /></IconBox>排序<Caret /></Tool>
            <Tool><IconBox><IcFilter /></IconBox>过滤<Caret $m={0} /></Tool>
            <Sep />
            <Tool><IconBox $w={16}><IcDoc /></IconBox>从其他楼层复制构件</Tool>
            <Tool><IconBox $w={17}><IcDoc /></IconBox>复制构件到其他楼层</Tool>
            <Sep />
            <Tool>查找<Caret /></Tool>
            <Sep />
            <Tool><IconBox $w={16}><IcUp /></IconBox>上移</Tool>
            <Tool $off><IconBox><IcDown /></IconBox>下移</Tool>
          </Tool2>
          <Work>
            <CompCol>
              <SearchRow>
                <SearchInput>搜索构件...</SearchInput>
                <SearchIcon><IcSearch /></SearchIcon>
              </SearchRow>
              <CompBox>
                <CompList>
                  {comps.map((c, i) => (
                    <CompRow key={c} $last={i === comps.length - 1}>
                      <Elbow $l={30} $w={9} />
                      <CompLabel $on={c === "KZ-50"}><CompIc />{c}</CompLabel>
                    </CompRow>
                  ))}
                </CompList>
                <ScrollBar>
                  <ScrollArrow><ArrUp /></ScrollArrow>
                  <ScrollGap $h={201} />
                  <ScrollThumb $h={328} />
                  <ScrollGap $h={0} />
                  <ScrollArrow><ArrDown /></ScrollArrow>
                </ScrollBar>
              </CompBox>
            </CompCol>

            <PropPanel>
              <TabRow><Tab>属性编辑</Tab></TabRow>
              <PropBody>
                <TableWrap>
                  <Grid>
                    <HCell />
                    <HCell>属性名称</HCell>
                    <HCell $hot>属性值</HCell>
                    <HCell>附加</HCell>
                    {rows.map((r) => (
                      <React.Fragment key={r.i}>
                        <Idx $on={r.on}>{r.i}</Idx>
                        <NameCell $tone={r.t} $on={r.on}>{r.exp && <Expand />}{r.n}{r.code && <Code>{r.code}</Code>}</NameCell>
                        <ValCell $on={r.on} $gray={r.gray} $mono={r.mono}>{r.v}</ValCell>
                        <ExtraCell $on={r.on}>{r.chk && <Check />}</ExtraCell>
                      </React.Fragment>
                    ))}
                  </Grid>
                </TableWrap>
                <ScrollBar $w={16}>
                  <ScrollArrow><ArrUp /></ScrollArrow>
                  <ScrollGap $h={2} />
                  <ScrollThumb $h={309} />
                  <ScrollGap $h={224} />
                  <ScrollArrow><ArrDown /></ScrollArrow>
                </ScrollBar>
              </PropBody>
              <Ring width="112" height="54" viewBox="0 0 112 54">
                <ellipse cx="56" cy="27" rx="50.5" ry="22" stroke="#f00" strokeWidth="7.5" fill="none" />
              </Ring>
              <Dialog>
                <DialogTitle>截面编辑</DialogTitle>
                <DialogInner>
                  <DlgBar>
                    <DlgTool>布角筋</DlgTool>
                    <DlgTool>布边筋</DlgTool>
                    <DlgTool>特殊布筋</DlgTool>
                    <DlgTool>对齐钢筋</DlgTool>
                    <DlgTool $on>画箍筋</DlgTool>
                    <DlgSep />
                    <DlgTool>修改纵筋</DlgTool>
                    <DlgTool>修改箍筋</DlgTool>
                    <DlgTool>编辑弯钩</DlgTool>
                    <DlgMore><Chevrons>»</Chevrons></DlgMore>
                  </DlgBar>
                  <DlgBar2>
                    钢筋信息
                    <DlgCombo>C10@100<DlgDrop><Caret /></DlgDrop></DlgCombo>
                  </DlgBar2>
                  <CanvasBox>
                    <Section />
                    <Popup>
                      <PopupHead>绘制箍筋</PopupHead>
                      <PopupBtn />
                    </Popup>
                  </CanvasBox>
                  <DlgStatus>
                    <DlgCoord>(X: 538 Y: 622)</DlgCoord>
                    <DlgHint>请指定第一个角点所在纵筋或网格交点，按右键终止或ESC键取消</DlgHint>
                    <Grip />
                  </DlgStatus>
                </DialogInner>
              </Dialog>
            </PropPanel>
          </Work>
        </RightCol>
      </Main>

      <StatusBar>
        <SCell $w={148} />
        <SCell $w={78}><SCjk>层高:</SCjk>2.15m</SCell>
        <SCell $w={98}><SCjk>底标高:</SCjk>-2.2m</SCell>
        <SCell $w={48}>0</SCell>
        <SCell />
        <SCell $w={70}>551.8 FPS</SCell>
      </StatusBar>

      <Taskbar>
        <StartBtn><Svg w={16} h={16}><path d="M0 2.5l6.5-1v6H0zM7.5 1.3L16 0v7.5H7.5zM0 8.5h6.5v6L0 13.5zM7.5 8.5H16V16l-8.5-1.3z" fill="#fff" /></Svg></StartBtn>
        <TaskSearch>
          <Svg w={22} h={22}><circle cx="11" cy="11" r="8.5" stroke="#111" strokeWidth="2.6" /></Svg>
          <SearchHint>在这里输入你要搜索的内容</SearchHint>
          <Svg w={14} h={20}><rect x="4" y="1" width="6" height="11" rx="3" stroke="#333" /><path d="M1.5 9c0 6 11 6 11 0M7 14v4M4 18.5h6" stroke="#333" /></Svg>
        </TaskSearch>
        <Apps>
          <AppBtn><Svg w={16} h={16}><path d="M0 1h3M13 1h3M0 15h3M13 15h3" stroke="#fff" /><path d="M2.5 4.5h11v7h-11z" stroke="#fff" /><path d="M15 3v3M15 9v1" stroke="#fff" /></Svg></AppBtn>
          <AppBtn><Svg w={24} h={26}><path d="M12 13C8 13 2 9 3 5c1-3 7-5 9-1 1 3 0 6 0 9zM12 13c0-4 4-10 8-9 3 1 4 7 1 9-3 1-6 0-9 0zM12 13c4 0 10 4 9 8-1 3-7 5-9 1-1-3 0-6 0-9zM12 13c0 4-4 10-8 9-3-1-4-7-1-9 3-1 6 0 9 0z" fill="#e8e8e8" /></Svg></AppBtn>
          <AppBtn><Svg w={24} h={26}><circle cx="12" cy="14" r="8" stroke="#e8e8e8" strokeWidth="3" /><path d="M5 13h15" stroke="#e8e8e8" strokeWidth="2.6" /><path d="M4 22C1 20 15 4 20 3c3 0 2 3 1 6" stroke="#e8e8e8" strokeWidth="1.3" /></Svg></AppBtn>
          <AppBtn>
            <Svg w={26} h={26}><circle cx="10" cy="15" r="8" stroke="#ddd" strokeWidth="1.6" /><circle cx="11" cy="15" r="4.5" stroke="#ddd" strokeWidth="1.4" /><path d="M19 3c-3 0-4 3-4 5l-2 3h12l-2-3c0-2-1-5-4-5z" fill="#f2a81d" /><circle cx="19" cy="12" r="1.6" fill="#f2a81d" /></Svg>
          </AppBtn>
          <AppBtn $on><Svg w={24} h={24}><rect width="24" height="24" rx="4" fill="#0a8fe8" /><path d="M12 3v18M4 11c0-3 5-3 8 0s8 3 8 0M4 11c0 3 5 3 8 0" stroke="#fff" strokeWidth="1.8" /></Svg></AppBtn>
        </Apps>
        <TrayScroll><ArrUp /><ArrDown /></TrayScroll>
        <TrayItem $w={60}><Svg w={16} h={18}><circle cx="5" cy="8" r="2.5" stroke="#eee" /><circle cx="11" cy="4" r="2.5" stroke="#eee" /><path d="M1 16c0-3 2-5 4-5s3 2 3 5M8 9c1-2 2-2 3-2s3 1 4 4" stroke="#eee" /></Svg></TrayItem>
        <TrayItem $w={66}><span>24%</span><span>CPU使用</span></TrayItem>
        <TrayItem $w={32}><Svg w={12} h={8}><path d="M1 7l5-5 5 5" stroke="#eee" strokeWidth="1.2" /></Svg></TrayItem>
        <TrayItem $w={18}><Svg w={16} h={14}><rect x="3" y="5" width="12" height="7" stroke="#eee" /><rect x="4" y="6" width="8" height="5" fill="#eee" /><path d="M2 0v4M5 0v4M1 3h5" stroke="#eee" /></Svg></TrayItem>
        <TrayItem $w={30}><Svg w={15} h={15}><path d="M1 7c4-4 9-6 13-6M4 10c3-3 6-5 10-5M7 12c2-2 4-3 7-3" stroke="#bbb" strokeDasharray="1 1" /><circle cx="13" cy="13" r="1.5" fill="#eee" /></Svg></TrayItem>
        <TrayItem $w={16}><Svg w={15} h={14}><path d="M1 5h3l4-4v12L4 9H1z" stroke="#eee" /><path d="M10 4c1 2 1 4 0 6M12.5 2c2 3 2 7 0 10" stroke="#eee" /></Svg></TrayItem>
        <TrayItem $w={40}><Svg w={22} h={15}><rect x=".5" y=".5" width="21" height="14" stroke="#eee" /><path d="M3 4h16M3 7h16" stroke="#eee" strokeDasharray="1 1" /><path d="M5 11h12" stroke="#eee" /></Svg></TrayItem>
        <TrayItem $w={16}>英</TrayItem>
        <TrayItem $w={40}><Svg w={16} h={17}><rect width="16" height="17" rx="3" fill="#e8501e" transform="rotate(-6 8 8)" /><path d="M12 5c-2-2-7-2-7 1 0 3 7 2 6 5-1 2-5 2-7 1" stroke="#fff" strokeWidth="2" /></Svg></TrayItem>
        <TrayItem $w={70}><span>9:14</span><span>2018/10/14</span></TrayItem>
        <TrayItem $w={44}>
          <Svg w={16} h={16}><path d="M0 0h15v11H6l-3 3v-3H0z" fill="#fff" /><path d="M3 3h9M3 6h9M3 8.5h6" stroke="#0a1a20" /></Svg>
          <Badge>1</Badge>
        </TrayItem>
        <TrayEnd />
      </Taskbar>
    </Page>
  );
}
